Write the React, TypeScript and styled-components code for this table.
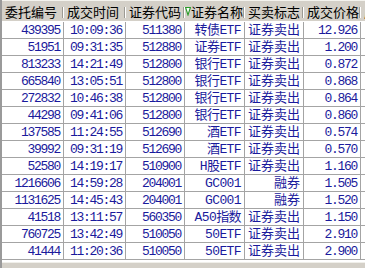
import React from 'react'
import styled, { createGlobalStyle } from 'styled-components'

const GlobalStyle = createGlobalStyle`
  html, body {
    margin: 0;
    padding: 0;
    background: #ffffff;
  }
  body {
    font-family: "Noto Sans CJK SC", "Liberation Sans", sans-serif;
  }
`

const COLS = '62px 62px 59px 60px 59px 57px 1fr'

const Window = styled.div`
  width: 365px;
  height: 268px;
  display: flex;
  flex-direction: column;
  overflow: hidden;
  border-left: 2px solid #9a9a9a;
  box-sizing: border-box;
`

const Grid = styled.div`
  display: grid;
  grid-template-columns: ${COLS};
  grid-auto-rows: 17px;
`

const HeadRow = styled.div`
  display: grid;
  grid-template-columns: ${COLS};
  height: 22px;
  background: #d4d0c8;
  border-top: 1px solid #f4f3ee;
  border-bottom: 1px solid #ffffff;
  box-sizing: border-box;
`

const HeadCell = styled.div<{ $last?: boolean; $sorted?: boolean }>`
  position: relative;
  display: flex;
  align-items: center;
  padding-left: ${p => (p.$sorted ? '0' : '3px')};
  font-size: 13px;
  line-height: 15px;
  color: #000000;
  white-space: nowrap;
  overflow: hidden;
  &::after {
    content: '';
    display: ${p => (p.$last ? 'none' : 'block')};
    position: absolute;
    right: 0;
    top: 6px;
    height: 11px;
    border-left: 1px solid #9c9a94;
    border-right: 1px solid #ffffff;
  }
`

const MONO = '"Liberation Mono", "Noto Sans CJK SC", monospace'

const spacing = {
  num: '-1.3px',
  mixed: '-0.6px',
  cjk: '0',
}

type Kind = keyof typeof spacing

const Cell = styled.div<{ $kind: Kind }>`
  display: flex;
  align-items: center;
  justify-content: flex-end;
  padding: 1px 3px 0 0;
  box-sizing: border-box;
  border-right: 1px solid #a4a4a4;
  border-bottom: 1px solid #a4a4a4;
  white-space: nowrap;
  overflow: hidden;
  color: #1a1a9c;
  font-size: 13px;
  line-height: 15px;
  font-family: ${MONO};
  letter-spacing: ${p => spacing[p.$kind]};
`

const EmptyCell = styled.div`
  border-bottom: 1px solid #a4a4a4;
`

const Filler = styled.div`
  flex: 1;
  background: #ffffff;
`

const ScrollEdge = styled.div`
  height: 5px;
  background: #d4d0c8;
  border-top: 1px solid #f0efea;
`

const SortMark = () => (
  <svg width="6" height="10" viewBox="0 0 6 10" style={{ flexShrink: 0 }}>
    <polygon points="0.6,1.5 5.4,1.5 3,9" fill="#ffffff" stroke="#2a9a2a" strokeWidth="1.1" />
  </svg>
)

type Row = [string, string, string, string, string, string]

const rows: Row[] = [
  ['439395', '10:09:36', '511380', '转债ETF', '证券卖出', '12.926'],
  ['51951', '09:31:35', '512880', '证券ETF', '证券卖出', '1.200'],
  ['813233', '14:21:49', '512800', '银行ETF', '证券卖出', '0.872'],
  ['665840', '13:05:51', '512800', '银行ETF', '证券卖出', '0.868'],
  ['272832', '10:46:38', '512800', '银行ETF', '证券卖出', '0.864'],
  ['44298', '09:41:06', '512800', '银行ETF', '证券卖出', '0.860'],
  ['137585', '11:24:55', '512690', '酒ETF', '证券卖出', '0.574'],
  ['39992', '09:31:19', '512690', '酒ETF', '证券卖出', '0.570'],
  ['52580', '14:19:17', '510900', 'H股ETF', '证券卖出', '1.160'],
  ['1216606', '14:59:28', '204001', 'GC001', '融券', '1.505'],
  ['1131625', '14:45:43', '204001', 'GC001', '融券', '1.520'],
  ['41518', '13:11:57', '560350', 'A50指数', '证券卖出', '1.150'],
  ['760725', '13:42:49', '510050', '50ETF', '证券卖出', '2.910'],
  ['41444', '11:20:36', '510050', '50ETF', '证券卖出', '2.900'],
]

const headers = ['委托编号', '成交时间', '证券代码', '证券名称', '买卖标志', '成交价格', '成交数量']

export default function App() {
  return (
    <>
      <GlobalStyle />
      <Window>
        <HeadRow>
          {headers.map((h, i) => (
            <HeadCell key={h} $last={i === headers.length - 1} $sorted={i === 3}>
              {i === 3 && <SortMark />}
              {h}
            </HeadCell>
          ))}
        </HeadRow>
        <Grid>
          {rows.map(r => (
            <React.Fragment key={r[0]}>
              <Cell $kind="num">{r[0]}</Cell>
              <Cell $kind="num">{r[1]}</Cell>
              <Cell $kind="num">{r[2]}</Cell>
              <Cell $kind="mixed">{r[3]}</Cell>
              <Cell $kind="cjk">{r[4]}</Cell>
              <Cell $kind="num">{r[5]}</Cell>
              <EmptyCell />
            </React.Fragment>
          ))}
        </Grid>
        <Filler />
        <ScrollEdge />
      </Window>
    </>
  )
}
